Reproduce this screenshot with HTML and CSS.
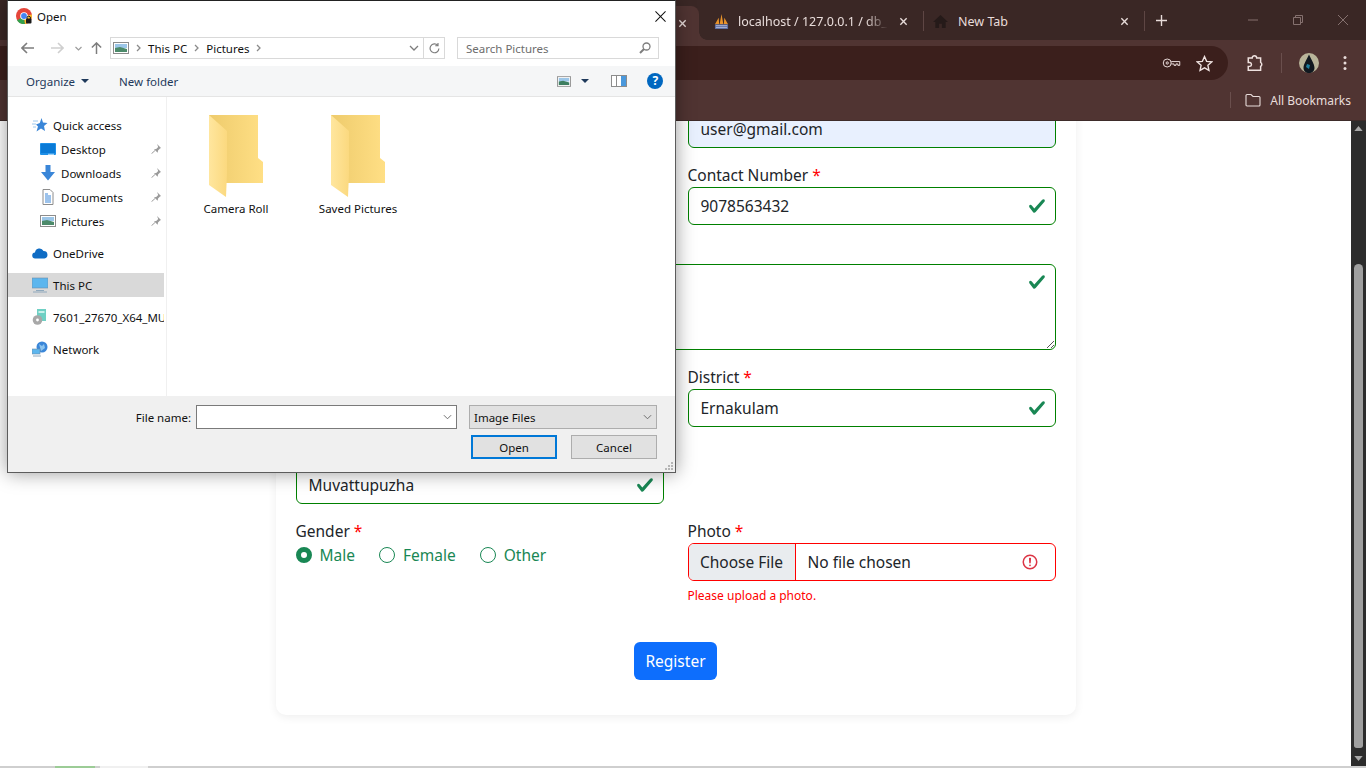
FILE: index.html
```html
<!DOCTYPE html>
<html lang="en">
<head>
<meta charset="utf-8">
<title>Register</title>
<link rel="stylesheet" href="styles.css">
</head>
<body>
<div class="browser">
  <div class="tabstrip">
    <div class="tab tab-active">
      <span class="tab-title"></span>
      <svg class="tab-close" viewBox="0 0 10 10"><path d="M1.5 1.5l7 7M8.5 1.5l-7 7"/></svg>
    </div>
    <div class="tab tab-php">
      <svg class="favicon" viewBox="0 0 16 16"><path d="M1 11L5 4l.5 7zM6 11l2-11 2 11zM10.500 11L11 4l4 7z" fill="#e8932b"/><rect x="1" y="11" width="14" height="5" fill="#5a6aa0"/><path d="M2 12.500h12M2 14.500h12" stroke="#c8d0e8" stroke-width=".8"/></svg>
      <span class="tab-title tab-fade">localhost / 127.0.0.1 / db_shop</span>
      <svg class="tab-close" viewBox="0 0 10 10"><path d="M1.5 1.5l7 7M8.5 1.5l-7 7"/></svg>
    </div>
    <i class="tab-sep"></i>
    <div class="tab tab-new">
      <svg class="favicon" viewBox="0 0 16 16"><path d="M8 1L0 8.500h2.500V15h4v-4.500h3V15h4V8.500H16z" fill="#251a19"/></svg>
      <span class="tab-title">New Tab</span>
      <svg class="tab-close" viewBox="0 0 10 10"><path d="M1.5 1.5l7 7M8.5 1.5l-7 7"/></svg>
    </div>
    <i class="tab-sep"></i>
    <svg class="new-tab" viewBox="0 0 12 12"><path d="M6 0v12M0 6h12"/></svg>
    <div class="win-controls">
      <svg viewBox="0 0 12 12"><path d="M1 6h10"/></svg>
      <svg viewBox="0 0 12 12"><path d="M1.500 3.500h7v7h-7zM3.500 3.500V1.500h7v7H8.500"/></svg>
      <svg viewBox="0 0 12 12"><path d="M1 1l10 10M11 1L1 11"/></svg>
    </div>
  </div>
  <div class="toolbar">
    <div class="omnibox">
      <svg class="tool-icon key" viewBox="0 0 20 12"><circle cx="5.500" cy="6" r="4.200"/><circle cx="5.500" cy="6" r="1.200"/><path d="M9.700 4.500h9v4h-2v-1.500h-2v1.500h-2v-1.500H9.700"/></svg>
      <svg class="tool-icon star" viewBox="0 0 16 16"><path d="M8 1.500l2 4.500 4.800.5-3.600 3.200 1 4.800L8 12.100l-4.200 2.400 1-4.800L1.200 6.500 6 6z"/></svg>
    </div>
    <svg class="tool-icon ext" viewBox="0 0 16 16"><path d="M2 3.500h3.500a2 2 0 0 1 4 0H13v4a2 2 0 0 1 0 3.500v3.500H2v-3.500h1.500a1.800 1.800 0 0 0 0-3.500H2z"/></svg>
    <i class="tool-sep"></i>
    <svg class="avatar" viewBox="0 0 20 20"><circle cx="10" cy="10" r="10" fill="#b9b59a"/><path d="M10 1.500C8 6 4.500 11 4.500 15c0 3 2.500 5 5.500 5s5.500-2 5.500-5c0-4-3.500-9-5.500-13.500z" fill="#10181f"/><path d="M8 11l3 1-1 4-3-2z" fill="#1f7f9e"/></svg>
    <svg class="dots" viewBox="0 0 4 16"><circle cx="2" cy="2.500" r="1.500"/><circle cx="2" cy="8" r="1.500"/><circle cx="2" cy="13.500" r="1.500"/></svg>
  </div>
  <div class="bookmarks">
    <i class="bm-sep"></i>
    <svg class="bm-folder" viewBox="0 0 16 14"><path d="M1 2.500a1 1 0 0 1 1-1h4l2 2h6a1 1 0 0 1 1 1v7.500a1 1 0 0 1-1 1H2a1 1 0 0 1-1-1z"/></svg>
    <span class="bm-label">All Bookmarks</span>
  </div>
  <div class="content">
    <main class="viewport">
      <form class="card">
        <div class="field col-2">
          <label class="label">Email <b class="req">*</b></label>
          <div class="input valid autofill"><span>user@gmail.com</span></div>
        </div>
        <div class="field col-2">
          <label class="label">Contact Number <b class="req">*</b></label>
          <div class="input valid"><span>9078563432</span><svg class="check" viewBox="0 0 8 8"><path d="M2.300 6.730.6 4.530c-.4-1.040.46-1.400 1.100-.8l1.100 1.400 3.400-3.800c.6-.63 1.600-.27 1.200.7l-4 4.600c-.43.5-.8.4-1.100.1z"/></svg></div>
        </div>
        <div class="field full">
          <label class="label">Address <b class="req">*</b></label>
          <div class="input valid area"><svg class="check" viewBox="0 0 8 8"><path d="M2.300 6.730.6 4.530c-.4-1.040.46-1.400 1.100-.8l1.100 1.400 3.400-3.800c.6-.63 1.600-.27 1.200.7l-4 4.600c-.43.5-.8.4-1.100.1z"/></svg><svg class="grip" viewBox="0 0 8 8"><path d="M8 1L1 8M8 5L5 8"/></svg></div>
        </div>
        <div class="field col-2">
          <label class="label">District <b class="req">*</b></label>
          <div class="input valid"><span>Ernakulam</span><svg class="check" viewBox="0 0 8 8"><path d="M2.300 6.730.6 4.530c-.4-1.040.46-1.400 1.100-.8l1.100 1.400 3.400-3.800c.6-.63 1.600-.27 1.200.7l-4 4.600c-.43.5-.8.4-1.100.1z"/></svg></div>
        </div>
        <div class="field col-1">
          <label class="label">City <b class="req">*</b></label>
          <div class="input valid"><span>Muvattupuzha</span><svg class="check" viewBox="0 0 8 8"><path d="M2.300 6.730.6 4.530c-.4-1.040.46-1.400 1.100-.8l1.100 1.400 3.400-3.800c.6-.63 1.600-.27 1.200.7l-4 4.600c-.43.5-.8.4-1.100.1z"/></svg></div>
        </div>
        <div class="field col-1">
          <label class="label">Gender <b class="req">*</b></label>
          <div class="radios">
            <span class="radio-item male"><i class="radio checked"></i>Male</span>
            <span class="radio-item female"><i class="radio"></i>Female</span>
            <span class="radio-item"><i class="radio"></i>Other</span>
          </div>
        </div>
        <div class="field col-2">
          <label class="label">Photo <b class="req">*</b></label>
          <div class="input invalid file"><span class="file-btn">Choose File</span><span class="file-name">No file chosen</span><svg class="alert" viewBox="0 0 12 12"><circle cx="6" cy="6" r="4.500"/><path d="M5.800 3.600h.4L6 6.500z"/><circle class="alert-dot" cx="6" cy="8.200" r=".6"/></svg></div>
          <p class="error">Please upload a photo.</p>
        </div>
        <div class="actions"><span class="submit">Register</span></div>
      </form>
    </main>
    <div class="scrollbar">
      <svg class="sb-arrow" viewBox="0 0 10 6"><path d="M5 0l5 6H0z"/></svg>
      <div class="sb-thumb"></div>
      <svg class="sb-arrow" viewBox="0 0 10 6"><path d="M5 6l5-6H0z"/></svg>
    </div>
  </div>
  <div class="taskstrip"><i class="ts-green"></i><i class="ts-light"></i></div>
</div>

<section class="dialog">
  <header class="dlg-title">
    <svg class="dlg-chrome" viewBox="0 0 16 16"><circle cx="8" cy="8" r="8" fill="#e5453a"/><path d="M8 8L1 12.500A8 8 0 0 0 9 15.900z" fill="#31a24c"/><path d="M8 8l7.800-1.500A8 8 0 0 1 9 15.900z" fill="#fbc02d"/><circle cx="8" cy="8" r="3.800" fill="#fff"/><circle cx="8" cy="8" r="2.900" fill="#4285f4"/><rect x="10" y="10.500" width="5.500" height="5" rx="1" fill="#1a1a1a"/><circle cx="12.700" cy="10" r="1.800" fill="none" stroke="#1a1a1a"/></svg>
    <span class="dlg-name">Open</span>
    <svg class="dlg-x" viewBox="0 0 12 12"><path d="M.5.500l11 11M11.500.500l-11 11"/></svg>
  </header>
  <div class="dlg-nav">
    <svg class="nav-btn back" viewBox="0 0 13 12"><path d="M6 1L1 6l5 5M1 6h12"/></svg>
    <svg class="nav-btn fwd" viewBox="0 0 13 12"><path d="M7 1l5 5-5 5M12 6H0"/></svg>
    <svg class="nav-drop" viewBox="0 0 7 5"><path d="M.5 1l3 3 3-3"/></svg>
    <svg class="nav-btn up" viewBox="0 0 12 13"><path d="M1 6l5-5 5 5M6 1v12"/></svg>
    <div class="addr">
      <svg class="pic-icon" viewBox="0 0 16 12"><rect x=".5" y=".5" width="15" height="11" fill="#fff" stroke="#8c8c8c"/><rect x="2" y="2" width="12" height="4" fill="#9cc6e8"/><path d="M2 6l5-1 7 2v3H2z" fill="#4c8a6a"/></svg>
      <svg class="crumb" viewBox="0 0 5 8"><path d="M1 1l3 3-3 3"/></svg>
      <span class="crumb-text">This PC</span>
      <svg class="crumb" viewBox="0 0 5 8"><path d="M1 1l3 3-3 3"/></svg>
      <span class="crumb-text">Pictures</span>
      <svg class="crumb" viewBox="0 0 5 8"><path d="M1 1l3 3-3 3"/></svg>
      <svg class="addr-drop" viewBox="0 0 10 6"><path d="M1 1l4 4 4-4"/></svg>
      <span class="addr-refresh"><svg viewBox="0 0 12 12"><path d="M9.500 2.500A4.800 4.800 0 1 0 10.800 6M9.800 0v3H6.800"/></svg></span>
    </div>
    <div class="search">
      <span>Search Pictures</span>
      <svg viewBox="0 0 12 12"><circle cx="7.500" cy="4.500" r="3.500"/><path d="M5 7L1 11" class="thick"/></svg>
    </div>
  </div>
  <div class="dlg-tools">
    <span class="tool-text">Organize</span>
    <svg class="caret organize-caret" viewBox="0 0 8 4"><path d="M0 0h8L4 4z"/></svg>
    <span class="tool-text newfolder">New folder</span>
    <svg class="pic-icon view" viewBox="0 0 16 12"><rect x=".5" y=".5" width="15" height="11" fill="#fff" stroke="#8c8c8c"/><rect x="2" y="2" width="12" height="4" fill="#9cc6e8"/><path d="M2 6l5-1 7 2v3H2z" fill="#3d7e60"/></svg>
    <svg class="caret view-caret" viewBox="0 0 8 4"><path d="M0 0h8L4 4z"/></svg>
    <svg class="pane" viewBox="0 0 16 12"><rect x=".5" y=".5" width="15" height="11" fill="#fff" stroke="#8c8c8c"/><rect x="10" y="1" width="5" height="10" fill="#4a98dc"/><path d="M5.500 1v10" stroke="#8c8c8c"/></svg>
    <span class="help">?</span>
  </div>
  <div class="dlg-body">
    <nav class="side">
      <div class="side-row top"><svg class="side-icon" viewBox="0 0 16 16"><path d="M9.500 1l1.500 4.500 4.500.5-3.500 3 1 5-4-2.500-4.500 3 1.500-5L4 7.500 7.800 6z" fill="#3a86d8"/><path d="M1 4h5M0 7h4M1 10h3" stroke="#9cc8ee"/></svg><span>Quick access</span></div>
      <div class="side-row sub"><svg class="side-icon" viewBox="0 0 16 16"><rect y="2" width="16" height="12" rx="1" fill="#1e90e8"/><rect x="1" y="3" width="14" height="9" fill="#0a7ad6"/><path d="M8 13.300h6" stroke="#bfe0f7"/></svg><span>Desktop</span><svg class="pin" viewBox="0 0 10 10"><path d="M6 0l4 4-1 .6-2 2-.3 2.200L3 5.300l2.200-.3 2-2z"/><path d="M4 6.500L.5 9.700" stroke="#9a9a9a"/></svg></div>
      <div class="side-row sub"><svg class="side-icon" viewBox="0 0 16 16"><path d="M5.500 0h5v7H15l-7 8.500L1 7h4.500z" fill="#3a86d8"/></svg><span>Downloads</span><svg class="pin" viewBox="0 0 10 10"><path d="M6 0l4 4-1 .6-2 2-.3 2.200L3 5.300l2.200-.3 2-2z"/><path d="M4 6.500L.5 9.700" stroke="#9a9a9a"/></svg></div>
      <div class="side-row sub"><svg class="side-icon" viewBox="0 0 16 16"><path d="M3 .5h7l3 3v12H3z" fill="#fff" stroke="#8c8c8c"/><path d="M5 5h3M5 7h6M5 9h6M5 11h6M5 13h6" stroke="#3a86d8"/></svg><span>Documents</span><svg class="pin" viewBox="0 0 10 10"><path d="M6 0l4 4-1 .6-2 2-.3 2.200L3 5.300l2.200-.3 2-2z"/><path d="M4 6.500L.5 9.700" stroke="#9a9a9a"/></svg></div>
      <div class="side-row sub"><svg class="side-icon" viewBox="0 0 16 12"><rect x=".5" y=".5" width="15" height="11" fill="#fff" stroke="#8c8c8c"/><rect x="2" y="2" width="12" height="4" fill="#9cc6e8"/><path d="M2 6l5-1 7 2v3H2z" fill="#4c8a6a"/></svg><span>Pictures</span><svg class="pin" viewBox="0 0 10 10"><path d="M6 0l4 4-1 .6-2 2-.3 2.200L3 5.300l2.200-.3 2-2z"/><path d="M4 6.500L.5 9.700" stroke="#9a9a9a"/></svg></div>
      <div class="side-row top gap"><svg class="side-icon" viewBox="0 0 16 11"><path d="M3.500 11a3 3 0 0 1-.5-6A4.500 4.500 0 0 1 11.500 3.500 3.800 3.800 0 0 1 12.500 11z" fill="#0f6cc4"/></svg><span>OneDrive</span></div>
      <div class="side-row top gap selected"><svg class="side-icon" viewBox="0 0 16 16"><rect y="1" width="16" height="10" fill="#5cb6ee" stroke="#6e8ea8" stroke-width=".6"/><path d="M4 13.500h8M1 15h14" stroke="#8fa8bc"/></svg><span>This PC</span></div>
      <div class="side-row top gap"><svg class="side-icon" viewBox="0 0 16 16"><rect x="5" y="0" width="9" height="12" fill="#6fd0c4"/><rect x="6.500" y="2" width="6" height="2" fill="#c8f0ea"/><circle cx="5.500" cy="11" r="4.800" fill="#a8a8a8"/><circle cx="5.500" cy="11" r="1.400" fill="#fff"/></svg><span>7601_27670_X64_MUI</span></div>
      <div class="side-row top gap"><svg class="side-icon" viewBox="0 0 16 16"><circle cx="10" cy="6" r="5.500" fill="#3a86d8"/><path d="M7 3l3 2 2-2 1 4-4 3z" fill="#8cc4ee"/><rect y="8" width="8" height="5" fill="#5cb6ee" stroke="#6e8ea8" stroke-width=".6"/><path d="M1 15h8" stroke="#8fa8bc"/></svg><span>Network</span></div>
    </nav>
    <div class="files">
      <figure class="folder">
        <svg viewBox="0 0 55 82"><defs><linearGradient id="fb" x1="0" x2="1"><stop offset="0" stop-color="#eecb6c"/><stop offset="1" stop-color="#ffdf85"/></linearGradient><linearGradient id="ff" x1="0" x2="1"><stop offset="0" stop-color="#ffe69e"/><stop offset="1" stop-color="#fbd97f"/></linearGradient></defs><path d="M0 0H49V43L54 47V68H16V60H0z" fill="url(#fb)"/><path d="M0 0L18 16V58L17 82L0 70z" fill="url(#ff)"/></svg>
        <figcaption>Camera Roll</figcaption>
      </figure>
      <figure class="folder">
        <svg viewBox="0 0 55 82"><path d="M0 0H49V43L54 47V68H16V60H0z" fill="url(#fb)"/><path d="M0 0L18 16V58L17 82L0 70z" fill="url(#ff)"/></svg>
        <figcaption>Saved Pictures</figcaption>
      </figure>
    </div>
  </div>
  <footer class="dlg-foot">
    <div class="foot-row">
      <span class="fn-label">File name:</span>
      <div class="fn-input"><svg viewBox="0 0 10 6"><path d="M1 1l4 4 4-4"/></svg></div>
      <div class="fn-type"><span>Image Files</span><svg viewBox="0 0 10 6"><path d="M1 1l4 4 4-4"/></svg></div>
    </div>
    <div class="foot-row btns">
      <span class="win-btn primary">Open</span>
      <span class="win-btn">Cancel</span>
    </div>
    <svg class="sizer" viewBox="0 0 9 9"><path d="M7 1h2v2H7zM4 4h2v2H4zM7 4h2v2H7zM1 7h2v2H1zM4 7h2v2H4zM7 7h2v2H7z"/></svg>
  </footer>
</section>
</body>
</html>
```

FILE: styles.css
```css
* { box-sizing: border-box; }
html, body { margin: 0; height: 100%; overflow: hidden; background: #fff; }
body { font-family: "Noto Sans", "Open Sans", sans-serif; color: #212529; }
svg { display: block; flex: none; }
i { display: block; }

.browser { display: flex; flex-direction: column; height: 768px; width: 1366px; }

/* tab strip */
.tabstrip { height: 40px; flex: none; display: flex; align-items: center; background: #3a2725; color: #e8dcda; font-size: 12.5px; }
.tab { display: flex; align-items: center; height: 34px; margin-top: 6px; position: relative; }
.tab-active { width: 691px; margin-left: 8px; background: #503432; border-radius: 8px 8px 0 0; justify-content: flex-end; padding-right: 12px; }
.tab-active::after { content: ""; position: absolute; right: -8px; bottom: 0; width: 8px; height: 8px; background: radial-gradient(circle at 100% 0, transparent 7.500px, #503432 8px); }
.tab-php { width: 224px; padding: 0 15px; margin-top: 2px; height: 36px; }
.tab-new { width: 220px; padding: 0 15px 0 9px; margin-top: 2px; height: 36px; }
.favicon { width: 15px; height: 15px; margin-right: 9px; }
.tab-new .favicon { margin-right: 10px; }
.tab-title { flex: 1; white-space: nowrap; overflow: hidden; }
.tab-fade { -webkit-mask-image: linear-gradient(90deg, #000 85%, transparent 100%); mask-image: linear-gradient(90deg, #000 85%, transparent 100%); margin-right: 11px; }
.tab-close { width: 9px; height: 9px; fill: none; stroke: #e8dcda; stroke-width: 1.500; }
.tab-sep { width: 1px; height: 20px; background: #5e4644; margin-top: 2px; }
.new-tab { width: 11px; height: 11px; margin: 0 0 0 11px; fill: none; stroke: #e8dcda; stroke-width: 1.500; }
.win-controls { margin-left: auto; display: flex; align-items: center; gap: 33px; padding-right: 17px; }
.win-controls svg { width: 12px; height: 12px; fill: none; stroke: #85716f; stroke-width: 1; }

/* toolbar */
.toolbar { height: 40px; flex: none; display: flex; align-items: center; background: #503432; padding-top: 6px; }
.omnibox { width: 1228px; height: 34px; background: #3b1f1c; border-radius: 0 17px 17px 0; display: flex; align-items: center; justify-content: flex-end; padding-right: 15px; gap: 15px; }
.tool-icon { fill: none; stroke: #efe2e0; stroke-width: 1.300; }
.key { width: 19px; height: 12px; stroke-width: 1; }
.star { width: 17px; height: 17px; }
.ext { width: 18px; height: 18px; margin-left: 18px; }
.tool-sep { width: 1px; height: 20px; background: #6a4f4d; margin-left: 17px; }
.avatar { width: 20px; height: 20px; margin-left: 17px; }
.dots { width: 4px; height: 16px; margin-left: 24px; fill: #e8dcda; }

/* bookmarks */
.bookmarks { height: 41px; flex: none; display: flex; align-items: center; justify-content: flex-end; background: #503432; padding-right: 15px; color: #e8dcda; font-size: 12px; border-bottom: 1px solid #3e2c2a; }
.bm-sep { width: 1px; height: 16px; background: #6a4f4d; margin-right: 14px; }
.bm-folder { width: 16px; height: 14px; fill: none; stroke: #e8dcda; stroke-width: 1.100; margin-right: 9px; }

/* page */
.content { flex: 1; min-height: 0; display: flex; background: #fff; }
.viewport { flex: 1; min-width: 0; overflow: hidden; }
.card { width: 800px; margin: -55px auto 0; padding: 20px 20px 35px; background: #fff; border-radius: 10px; box-shadow: 0 2px 10px rgba(0, 0, 0, .07); display: grid; grid-template-columns: 368px 368px; column-gap: 24px; row-gap: 15px; align-items: start; }
.field { min-width: 0; }
.col-1 { grid-column: 1; }
.col-2 { grid-column: 2; }
.full { grid-column: 1 / 3; }
.label { display: block; height: 24px; line-height: 24px; font-size: 15.500px; }
.req { font-weight: 400; color: #f00; }
.input { height: 38px; border: 1px solid green; border-radius: 6px; display: flex; align-items: center; justify-content: space-between; padding: 0 9px 0 12px; font-size: 15.500px; background: #fff; position: relative; }
.autofill { background: #e8f0fe; }
.area { height: 86px; align-items: flex-start; justify-content: flex-end; padding-top: 8px; }
.grip { position: absolute; right: 1px; bottom: 1px; width: 8px; height: 8px; fill: none; stroke: #555; stroke-width: 1; }
.check { width: 18px; height: 18px; fill: #198754; }
.invalid { border-color: #f00; }
.file { padding: 0 16px 0 0; justify-content: flex-start; }
.file-btn { height: 100%; width: 107px; display: flex; align-items: center; justify-content: center; background: #e9ecef; border-right: 1px solid #f00; border-radius: 5px 0 0 5px; }
.file-name { flex: 1; padding-left: 12px; }
.alert { width: 18px; height: 18px; fill: none; stroke: #dc3545; }
.alert path { fill: #dc3545; stroke-linejoin: round; }
.alert-dot { fill: #dc3545; stroke: none; }
.error { margin: 5px 0 0; font-size: 12px; line-height: 19px; color: #f00; }
.radios { display: flex; font-size: 15.500px; color: #198754; height: 24px; align-items: center; }
.radio-item { display: flex; align-items: center; gap: 8px; }
.male { margin-right: 24px; }
.female { margin-right: 24px; }
.radio { width: 16px; height: 16px; border-radius: 50%; border: 1px solid #198754; background: #fff; }
.checked { border-width: 5px; }
.actions { grid-column: 1 / 3; display: flex; justify-content: center; padding-top: 22px; }
.submit { height: 38px; width: 83px; display: flex; align-items: center; justify-content: center; background: #0d6efd; color: #fff; border-radius: 6px; font-size: 15.500px; }

.scrollbar { width: 15px; flex: none; background: #2c2c2c; display: flex; flex-direction: column; align-items: center; padding: 5px 0; }
.sb-arrow { width: 9px; height: 5px; fill: #a8a8a8; }
.sb-thumb { width: 9px; height: 484px; margin-top: 133px; margin-bottom: auto; background: #9f9f9f; border-radius: 5px 5px 3px 3px; }

.taskstrip { height: 2px; flex: none; background: #cfcfcf; display: flex; }
.ts-green { width: 40px; margin-left: 55px; background: #9ccc96; }
.ts-light { width: 48px; margin-left: 5px; background: #f0f0f0; }

/* file dialog */
.dialog { position: absolute; left: 7px; top: 0; width: 669px; height: 473px; background: #fff; border: 1px solid #5c5c5c; border-top-color: #222; box-shadow: 0 0 18px rgba(0, 0, 0, .4); display: flex; flex-direction: column; font-size: 11.500px; color: #111; }
.dlg-title { height: 30px; flex: none; display: flex; align-items: center; padding: 0 9px 0 8px; }
.dlg-chrome { width: 16px; height: 16px; }
.dlg-name { margin-left: 5px; font-size: 11.500px; }
.dlg-x { width: 11px; height: 11px; margin-left: auto; fill: none; stroke: #111; stroke-width: 1.100; }
.dlg-nav { height: 22px; flex: none; margin-top: 6px; display: flex; align-items: center; padding-left: 13px; }
.nav-btn { width: 13px; height: 12px; fill: none; stroke: #7d7d7d; stroke-width: 1.600; }
.fwd { margin-left: 17px; stroke: #cfcfcf; }
.nav-drop { width: 7px; height: 5px; margin-left: 11px; fill: none; stroke: #9c9c9c; stroke-width: 1.200; }
.up { margin-left: 8px; }
.addr { width: 335px; height: 22px; margin-left: 7px; border: 1px solid #d9d9d9; display: flex; align-items: center; padding-left: 2px; }
.pic-icon { width: 16px; height: 12px; }
.crumb { width: 5px; height: 8px; fill: none; stroke: #8a8a8a; stroke-width: 1.300; margin: 0 7px 0 7px; }
.crumb-text { font-size: 11.500px; }
.addr-drop { width: 10px; height: 6px; margin-left: auto; margin-right: 4px; fill: none; stroke: #7d7d7d; stroke-width: 1.300; }
.addr-refresh { width: 21px; height: 100%; border-left: 1px solid #d9d9d9; display: flex; align-items: center; justify-content: center; }
.addr-refresh svg { width: 11px; height: 11px; fill: none; stroke: #7d7d7d; stroke-width: 1.300; }
.search { width: 202px; height: 22px; margin-left: 12px; border: 1px solid #d9d9d9; display: flex; align-items: center; justify-content: space-between; padding: 0 7px 0 8px; color: #6d6d6d; }
.search svg { width: 12px; height: 12px; fill: none; stroke: #7d7d7d; stroke-width: 1.300; }
.search .thick { stroke-width: 2; }
.dlg-tools { height: 31px; flex: none; margin-top: 7px; background: #f5f6f7; border-bottom: 1px solid #e5e5e5; display: flex; align-items: center; padding-left: 18px; color: #1e395b; }
.caret { width: 8px; height: 4px; fill: #1e395b; }
.organize-caret { margin-left: 6px; }
.newfolder { margin-left: 30px; }
.view { width: 14px; height: 11px; margin-left: 379px; }
.view-caret { margin-left: 10px; }
.pane { width: 16px; height: 12px; margin-left: 22px; }
.help { width: 16px; height: 16px; margin-left: 20px; border-radius: 50%; background: #0067c0; color: #fff; font-weight: 700; font-size: 12px; line-height: 16px; text-align: center; }
.dlg-body { flex: 1; min-height: 0; display: flex; }
.side { width: 159px; flex: none; border-right: 1px solid #f0f0f0; padding: 16px 2px 0 0; overflow: hidden; }
.side-row { height: 24px; display: flex; align-items: center; white-space: nowrap; overflow: hidden; }
.side-row.top { padding-left: 24px; }
.side-row.sub { padding-left: 32px; }
.side-row.gap { margin-top: 8px; }
.side-row.selected { background: #d9d9d9; }
.side-icon { width: 16px; height: 16px; margin-right: 5px; }
.pin { width: 10px; height: 10px; margin-left: auto; margin-right: 3px; fill: #9a9a9a; }
.files { flex: 1; display: flex; padding: 18px 0 0 8px; align-items: flex-start; }
.folder { margin: 0; width: 122px; display: flex; flex-direction: column; align-items: center; }
.folder svg { width: 55px; height: 82px; margin-left: 0; }
.folder figcaption { margin-top: 4px; line-height: 16px; white-space: nowrap; }
.dlg-foot { height: 76px; flex: none; background: #f0f0f0; position: relative; padding: 9px 18px 0 0; }
.foot-row { display: flex; align-items: center; justify-content: flex-end; }
.fn-label { margin-right: 5px; }
.fn-input { width: 261px; height: 24px; background: #fff; border: 1px solid #7a7a7a; display: flex; align-items: center; justify-content: flex-end; padding-right: 4px; }
.fn-input svg, .fn-type svg { width: 9px; height: 6px; fill: none; stroke: #606060; stroke-width: 1; }
.fn-type { width: 188px; height: 24px; margin-left: 12px; background: #e1e1e1; border: 1px solid #adadad; display: flex; align-items: center; justify-content: space-between; padding: 0 4px; }
.btns { margin-top: 6px; gap: 14px; }
.win-btn { width: 86px; height: 24px; background: #e1e1e1; border: 1px solid #adadad; display: flex; align-items: center; justify-content: center; }
.primary { border: 2px solid #0078d7; }
.sizer { position: absolute; right: 2px; bottom: 2px; width: 9px; height: 9px; fill: #b5b5b5; }
```
